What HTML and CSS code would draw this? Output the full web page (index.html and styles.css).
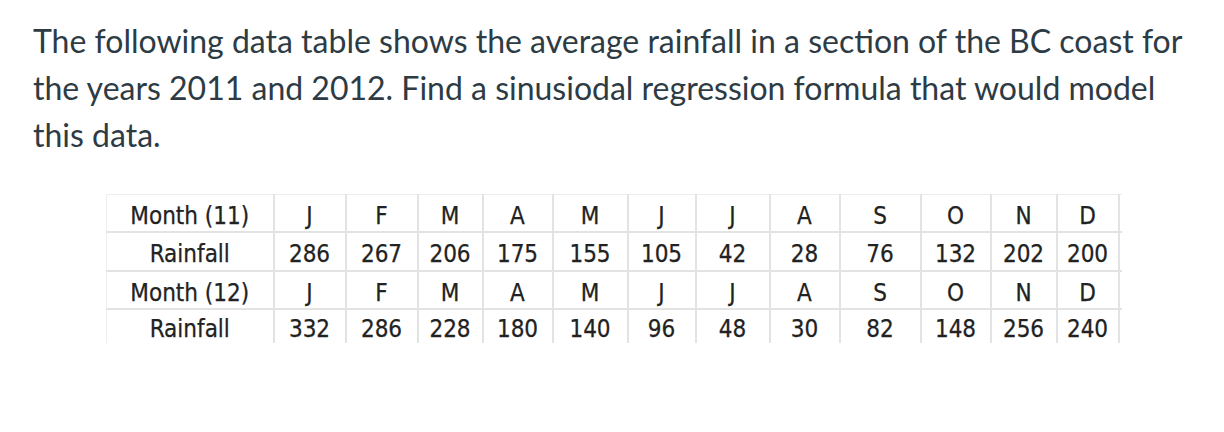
FILE: index.html
```html
<!DOCTYPE html>
<html>
<head>
<meta charset="utf-8">
<link rel="stylesheet" href="styles.css">
</head>
<body>
<div class="content">
  <p class="question">The following data table shows the average rainfall in a section of the BC coast for the years 2011 and 2012. Find a sinusiodal regression formula that would model<br>this data.</p>
  <table class="data">
    <colgroup>
      <col class="c-label"><col class="c1"><col class="c2"><col class="c3"><col class="c4"><col class="c5"><col class="c6"><col class="c7"><col class="c8"><col class="c9"><col class="c10"><col class="c11"><col class="c12"><col class="c-tail">
    </colgroup>
    <tr class="r1">
      <td>Month (11)</td><td>J</td><td>F</td><td>M</td><td>A</td><td>M</td><td>J</td><td>J</td><td>A</td><td>S</td><td>O</td><td>N</td><td>D</td><td class="tail"></td>
    </tr>
    <tr class="r2">
      <td>Rainfall</td><td>286</td><td>267</td><td>206</td><td>175</td><td>155</td><td>105</td><td>42</td><td>28</td><td>76</td><td>132</td><td>202</td><td>200</td><td class="tail"></td>
    </tr>
    <tr class="r3">
      <td>Month (12)</td><td>J</td><td>F</td><td>M</td><td>A</td><td>M</td><td>J</td><td>J</td><td>A</td><td>S</td><td>O</td><td>N</td><td>D</td><td class="tail"></td>
    </tr>
    <tr class="r4">
      <td>Rainfall</td><td>332</td><td>286</td><td>228</td><td>180</td><td>140</td><td>96</td><td>48</td><td>30</td><td>82</td><td>148</td><td>256</td><td>240</td><td class="tail"></td>
    </tr>
  </table>
</div>
</body>
</html>
```
FILE: styles.css
```css
html, body {
  margin: 0;
  padding: 0;
  background: #ffffff;
}

.content {
  padding: 17px 0 0 33px;
}

.question {
  margin: 0;
  width: 1160px;
  font-family: Lato, "Open Sans", sans-serif;
  font-size: 32px;
  line-height: 47px;
  color: #2d3b45;
}

.data {
  margin: 36px 0 0 73px;
  border-collapse: collapse;
  table-layout: fixed;
  font-family: "DejaVu Sans Condensed", "DejaVu Sans", sans-serif;
  font-size: 24px;
  color: #222222;
  -webkit-text-stroke: 0.25px #222222;
}

.data td {
  border: 2px solid #e2e3e3;
  text-align: center;
  padding: 5px 0 0 0;
  white-space: nowrap;
  overflow: hidden;
  line-height: 28px;
}

.data tr.r1 td { border-top: 1px solid #eeeeee; height: 31px; }
.data tr.r2 td { height: 32px; }
.data tr.r3 td { height: 31px; }
.data tr.r4 td { border-bottom: none; height: 28px; }

.data td:first-child { border-left: 1px solid #eeeeee; }
.data td.tail { border-right: none; }

.c-label { width: 167px; }
.c1 { width: 72px; }
.c2 { width: 72px; }
.c3 { width: 65px; }
.c4 { width: 70px; }
.c5 { width: 75px; }
.c6 { width: 68px; }
.c7 { width: 74px; }
.c8 { width: 70px; }
.c9 { width: 81px; }
.c10 { width: 70px; }
.c11 { width: 66px; }
.c12 { width: 62px; }
.c-tail { width: 3px; }
```
